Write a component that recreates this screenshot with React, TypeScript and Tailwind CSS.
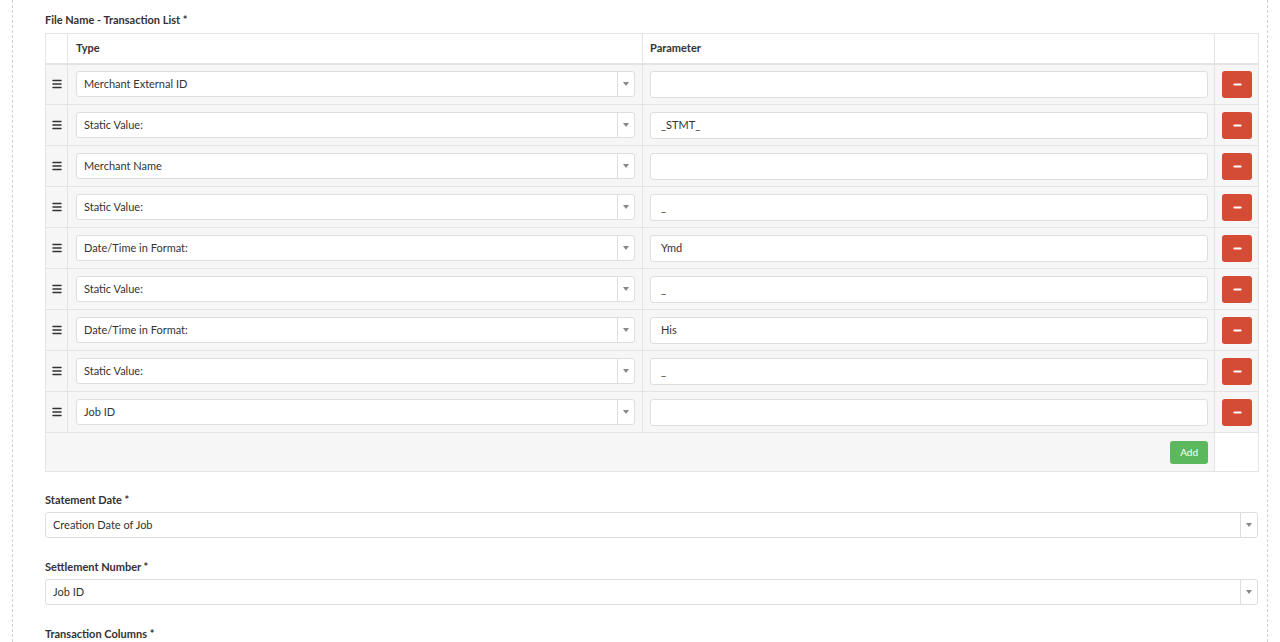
import { Menu, Minus } from "lucide-react";

const ROWS: { type: string; param: string }[] = [
  { type: "Merchant External ID", param: "" },
  { type: "Static Value:", param: "_STMT_" },
  { type: "Merchant Name", param: "" },
  { type: "Static Value:", param: "_" },
  { type: "Date/Time in Format:", param: "Ymd" },
  { type: "Static Value:", param: "_" },
  { type: "Date/Time in Format:", param: "His" },
  { type: "Static Value:", param: "_" },
  { type: "Job ID", param: "" },
];

function SelectBox({ value, className = "" }: { value: string; className?: string }) {
  return (
    <div className={`flex h-[26px] items-stretch rounded-[3px] border border-[#dedede] bg-white ${className}`}>
      <div className="flex flex-1 items-center px-[7px] text-[11px] text-[#333]">{value}</div>
      <div className="flex w-[17px] items-center justify-center border-l border-[#dedede]">
        <span className="h-0 w-0 border-x-[3.5px] border-t-[4px] border-x-transparent border-t-[#888]" />
      </div>
    </div>
  );
}

export default function App() {
  return (
    <div className="min-h-screen bg-white px-[12px] font-['Lato',sans-serif] text-[#333]">
      <div className="min-h-[642px] w-[1256px] border-x border-dashed border-[#d0d0d0] pl-[32px] pr-[8px] pt-[13px]">
        <label className="block text-[11px] font-bold leading-[14px]">File Name - Transaction List *</label>
        <table className="mt-[6px] w-[1213px] table-fixed border-collapse border border-[#e4e4e4] text-[11px]">
          <colgroup>
            <col className="w-[22px]" />
            <col className="w-[575px]" />
            <col className="w-[572px]" />
            <col className="w-[44px]" />
          </colgroup>
          <thead>
            <tr className="h-[30px] border-b-2 border-[#e4e4e4] bg-white">
              <th className="border-r border-[#e4e4e4]" />
              <th className="border-r border-[#e4e4e4] px-[8px] text-left font-bold">Type</th>
              <th className="border-r border-[#e4e4e4] px-[7px] text-left font-bold">Parameter</th>
              <th />
            </tr>
          </thead>
          <tbody>
            {ROWS.map((row, i) => (
              <tr key={i} className="h-[41px] border-b border-[#e4e4e4] bg-[#f6f6f6]">
                <td className="border-r border-[#e4e4e4] text-center align-middle">
                  <Menu className="mx-auto h-[12px] w-[12px] text-[#333]" strokeWidth={3} />
                </td>
                <td className="border-r border-[#e4e4e4] pl-[8px] pr-[7px]">
                  <SelectBox value={row.type} />
                </td>
                <td className="border-r border-[#e4e4e4] pl-[7px] pr-[6px]">
                  <div className="flex h-[27px] items-center rounded-[3px] border border-[#dedede] bg-white px-[10px] text-[11px]">
                    {row.param}
                  </div>
                </td>
                <td className="px-[7px]">
                  <button className="flex h-[27px] w-[30px] items-center justify-center rounded-[3px] bg-[#d44c36]">
                    <Minus className="h-[11px] w-[11px] text-white" strokeWidth={4} />
                  </button>
                </td>
              </tr>
            ))}
            <tr className="h-[39px]">
              <td colSpan={3} className="border-r border-[#e4e4e4] bg-[#f6f6f6] pr-[6px]">
                <div className="flex justify-end">
                  <button className="h-[23px] rounded-[3px] bg-[#5cb85c] px-[10px] text-[10px] text-white">Add</button>
                </div>
              </td>
              <td className="bg-white" />
            </tr>
          </tbody>
        </table>

        <label className="mt-[21px] block text-[11px] font-bold leading-[14px]">Statement Date *</label>
        <SelectBox value="Creation Date of Job" className="mt-[5px] w-[1213px]" />

        <label className="mt-[22px] block text-[11px] font-bold leading-[14px]">Settlement Number *</label>
        <SelectBox value="Job ID" className="mt-[5px] w-[1213px]" />

        <label className="mt-[22px] block text-[11px] font-bold leading-[14px]">Transaction Columns *</label>
      </div>
    </div>
  );
}
